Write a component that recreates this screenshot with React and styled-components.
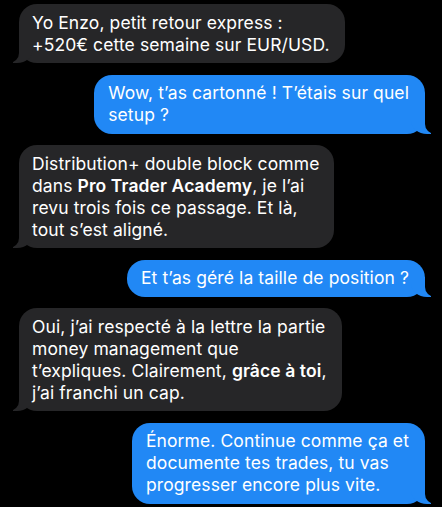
import React from "react";
import styled, { createGlobalStyle, css } from "styled-components";

const Global = createGlobalStyle`
  html, body { margin: 0; padding: 0; background: #000; }
  body { font-family: "Inter", "Liberation Sans", sans-serif; -webkit-font-smoothing: antialiased; }
`;

const Thread = styled.div`
  display: flex;
  flex-direction: column;
  gap: 11.5px;
  padding: 4px 17px 6px 19px;
  width: 442px;
  box-sizing: border-box;
  min-height: 507px;
  background: #000;
`;

const GRAY = "#262628";
const BLUE = "#2188f5";

const Bubble = styled.div`
  position: relative;
  align-self: ${(p) => (p.$me ? "flex-end" : "flex-start")};
  background: ${(p) => (p.$me ? BLUE : GRAY)};
  color: #fff;
  font-size: 17.5px;
  line-height: 22px;
  letter-spacing: 0.1px;
  padding: 7.5px 15px 7.5px 13px;
  border-radius: 18px;
  white-space: nowrap;

  &::before,
  &::after {
    content: "";
    position: absolute;
    bottom: 0;
    height: 20px;
  }

  ${(p) =>
    p.$me
      ? css`
          padding: 7.5px 16px 7.5px 14px;
          &::before {
            right: -6px;
            width: 20px;
            background: ${BLUE};
            border-bottom-left-radius: 16px 14px;
          }
          &::after {
            right: -26px;
            width: 26px;
            background: #000;
            border-bottom-left-radius: 10px;
          }
        `
      : css`
          &::before {
            left: -6px;
            width: 20px;
            background: ${GRAY};
            border-bottom-right-radius: 16px 14px;
          }
          &::after {
            left: -26px;
            width: 26px;
            background: #000;
            border-bottom-right-radius: 10px;
          }
        `}
`;

const Strong = styled.strong`
  font-weight: 600;
`;

const Line = styled.span`
  display: block;
  position: relative;
  z-index: 1;
`;

const messages = [
  { me: false, lines: ["Yo Enzo, petit retour express :", "+520€ cette semaine sur EUR/USD."] },
  { me: true, lines: ["Wow, t’as cartonné ! T’étais sur quel", "setup ?"] },
  {
    me: false,
    lines: [
      "Distribution+ double block comme",
      <>dans <Strong>Pro Trader Academy</Strong>, je l’ai</>,
      "revu trois fois ce passage. Et là,",
      "tout s’est aligné.",
    ],
  },
  { me: true, lines: ["Et t’as géré la taille de position ?"] },
  {
    me: false,
    lines: [
      "Oui, j’ai respecté à la lettre la partie",
      "money management que",
      <>t’expliques. Clairement, <Strong>grâce à toi</Strong>,</>,
      "j’ai franchi un cap.",
    ],
  },
  {
    me: true,
    lines: [
      "Énorme. Continue comme ça et",
      "documente tes trades, tu vas",
      "progresser encore plus vite.",
    ],
  },
];

export default function App() {
  return (
    <>
      <Global />
      <Thread>
        {messages.map((m, i) => (
          <Bubble key={i} $me={m.me}>
            {m.lines.map((l, j) => (
              <Line key={j}>{l}</Line>
            ))}
          </Bubble>
        ))}
      </Thread>
    </>
  );
}
